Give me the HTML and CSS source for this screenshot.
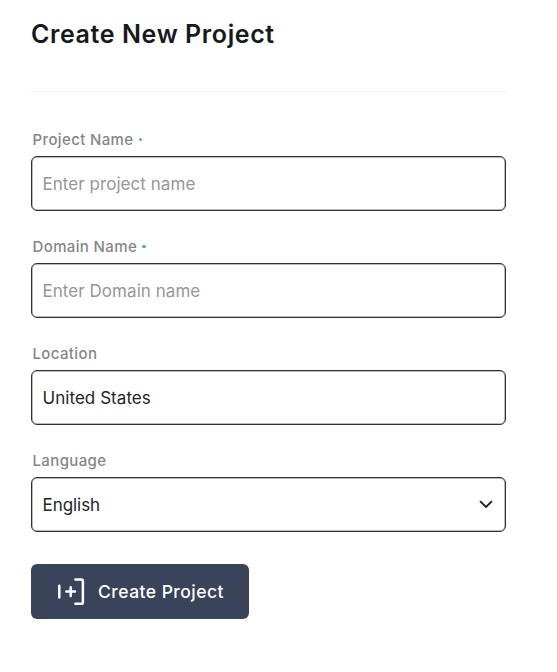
FILE: index.html
```html
<!DOCTYPE html>
<html lang="en">
<head>
    <meta charset="UTF-8">
    <meta name="viewport" content="width=device-width, initial-scale=1.0">
    <title>Create New Project</title>
    <link rel="stylesheet" href="styles.css">
</head>
<body>
    <div class="panel">
        <h1 class="title">Create New Project</h1>
        <form class="form" action="/projects" method="post">
            <div class="field">
                <label class="label" for="name">Project Name <span class="required"></span></label>
                <input class="input" id="name" name="name" type="text" placeholder="Enter project name">
            </div>
            <div class="field">
                <label class="label" for="domain">Domain Name <span class="required"></span></label>
                <input class="input" id="domain" name="domain" type="text" placeholder="Enter Domain name">
            </div>
            <div class="field">
                <label class="label" for="location">Location</label>
                <input class="input" id="location" name="location" type="text" value="United States">
            </div>
            <div class="field">
                <label class="label" for="language">Language</label>
                <div class="select-wrap">
                    <select class="input select" id="language" name="language">
                        <option>English</option>
                    </select>
                    <svg class="arrow" width="14" height="9" viewBox="0 0 14 9" fill="none">
                        <path d="M1 1.2L7 7L13 1.2" stroke="#171a1c" stroke-width="1.8"/>
                    </svg>
                </div>
            </div>
            <button class="submit" type="submit">
                <svg class="submit-icon" width="28" height="28" viewBox="0 0 28 28" fill="none" stroke="#fff" stroke-width="2.5" stroke-linecap="round" stroke-linejoin="round">
                    <path d="M2.3 7.7V19.5M9.4 13.6H18M13.7 9.3V17.9"/>
                    <path d="M18.4 1.6H24.3Q25.9 1.6 25.9 3.2V24.2Q25.9 25.8 24.3 25.8H18.4"/>
                </svg>
                <span>Create Project</span>
            </button>
        </form>
    </div>
</body>
</html>
```

FILE: styles.css
```css
* {
    box-sizing: border-box;
}
body {
    margin: 0;
    background: #fff;
    font-family: Inter, "Liberation Sans", sans-serif;
    color: #171a1c;
}
.panel {
    width: 506px;
    padding: 16px 0 0 31px;
}
.title {
    margin: 0;
    height: 76px;
    line-height: 36px;
    font-size: 25px;
    font-weight: 600;
    letter-spacing: 0.6px;
    border-bottom: 1px solid #f2f2f2;
}
.form {
    padding-top: 36px;
}
.field {
    height: 107px;
}
.label {
    display: flex;
    align-items: center;
    height: 28px;
    padding: 0 0 5px 1.5px;
    font-size: 15px;
    font-weight: 500;
    letter-spacing: 0.37px;
    color: #868686;
}
.required {
    width: 3.5px;
    height: 3.5px;
    margin-left: 5px;
    border-radius: 50%;
    background: #4aabe0;
}
.input {
    display: block;
    width: 100%;
    height: 55px;
    padding: 0 10.5px;
    border: 1px solid #303133;
    border-radius: 6px;
    box-shadow: inset 0 0 0 0.5px #77797a;
    background: #fff;
    font-family: inherit;
    font-size: 17px;
    letter-spacing: 0.05px;
    color: #222426;
    outline: none;
}
.input::placeholder {
    color: #969696;
}
.select-wrap {
    position: relative;
}
.select {
    appearance: none;
    letter-spacing: -0.05px;
}
.arrow {
    position: absolute;
    top: 23px;
    right: 13px;
}
.submit {
    display: flex;
    align-items: center;
    width: 218px;
    height: 55px;
    margin-top: 8px;
    padding: 0 0 0 26px;
    border: none;
    border-radius: 6px;
    background: #39435a;
    color: #fff;
    font-family: inherit;
    font-size: 17.5px;
    font-weight: 500;
    letter-spacing: 0.47px;
}
.submit-icon {
    margin-right: 13px;
}
```
